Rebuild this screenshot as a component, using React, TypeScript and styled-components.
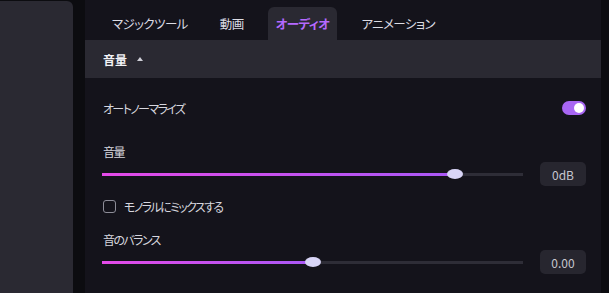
import React from "react";
import styled, { createGlobalStyle } from "styled-components";

const Global = createGlobalStyle`
  html, body { margin: 0; padding: 0; background: #0c0c10; overflow: hidden; }
  body { font-family: "Noto Sans CJK JP", "Noto Sans", sans-serif; font-feature-settings: "palt"; }
`;

const Page = styled.div`
  display: flex;
  width: 609px;
  height: 293px;
  background: #0c0c10;
  overflow: hidden;
`;

const SidePanel = styled.div`
  width: 73px;
  height: 100%;
  margin-top: 1px;
  background: #2a2932;
  border-top-right-radius: 6px;
  margin-right: 12px;
  flex-shrink: 0;
`;

const Main = styled.div`
  width: 516px;
  height: 100%;
  background: #14131b;
  display: flex;
  flex-direction: column;
  flex-shrink: 0;
`;

const TabBar = styled.div`
  display: flex;
  align-items: flex-end;
  height: 40px;
  padding-left: 19px;
  gap: 16px;
  flex-shrink: 0;
`;

const Tab = styled.div<{ $active?: boolean }>`
  height: 33px;
  padding: 0 8px 1px;
  display: flex;
  align-items: center;
  justify-content: center;
  font-size: 12.5px;
  letter-spacing: -0.6px;
  color: ${(p) => (p.$active ? "#b569ff" : "#dcdce4")};
  font-weight: ${(p) => (p.$active ? 700 : 400)};
  background: ${(p) => (p.$active ? "#2a2932" : "transparent")};
  border-radius: 6px 6px 0 0;
  box-sizing: border-box;
`;

const Header = styled.div`
  height: 38px;
  flex-shrink: 0;
  background: #2a2932;
  display: flex;
  align-items: center;
  padding-left: 18px;
  gap: 10px;
  font-size: 12px;
  font-weight: 700;
  color: #f2f2f6;
`;

const Caret = styled.span`
  width: 0;
  height: 0;
  border-left: 3.5px solid transparent;
  border-right: 3.5px solid transparent;
  border-bottom: 4px solid #d0d0d8;
  margin-top: -1px;
`;

const Body = styled.div`
  display: flex;
  flex-direction: column;
  padding: 0 15px 0 18px;
`;

const Row = styled.div<{ $h: number }>`
  height: ${(p) => p.$h}px;
  display: flex;
  align-items: center;
  gap: 17px;
  font-size: 12px;
  letter-spacing: -1.6px;
  color: #d6d6de;
  flex-shrink: 0;
`;

const Label = styled.span`
  flex: 1;
`;

const Toggle = styled.div`
  width: 24px;
  height: 14px;
  border-radius: 7px;
  background: #a866f3;
  display: flex;
  align-items: center;
  justify-content: flex-end;
  padding: 0 2px;
  box-sizing: border-box;
`;

const Knob = styled.div`
  width: 10px;
  height: 10px;
  border-radius: 50%;
  background: #ffffff;
`;

const Track = styled.div`
  flex: 1;
  height: 3px;
  background: #2e2d37;
  position: relative;
  margin-left: -1px;
`;

const Fill = styled.div`
  height: 100%;
  background: linear-gradient(90deg, #e44ae8, #a958f6);
`;

const Thumb = styled.div`
  position: absolute;
  top: 50%;
  width: 16px;
  height: 10px;
  border-radius: 50%;
  background: #d9d5f7;
  transform: translate(-50%, -50%);
`;

const ValueBox = styled.div`
  width: 46px;
  height: 24px;
  border-radius: 5px;
  background: #27262f;
  display: flex;
  align-items: center;
  justify-content: center;
  font-size: 12px;
  letter-spacing: 0;
  color: #c6c6d0;
  flex-shrink: 0;
`;

const CheckRow = styled(Row)`
  gap: 8px;
`;

const CheckBox = styled.div`
  width: 13px;
  height: 13px;
  border: 1.3px solid #8d8d98;
  border-radius: 3px;
  box-sizing: border-box;
`;

const Slider = ({ value }: { value: number }) => (
  <Track>
    <Fill style={{ width: `${value}%` }} />
    <Thumb style={{ left: `${value}%` }} />
  </Track>
);

export default function App() {
  return (
    <>
      <Global />
      <Page>
        <SidePanel />
        <Main>
          <TabBar>
            <Tab>マジックツール</Tab>
            <Tab>動画</Tab>
            <Tab $active>オーディオ</Tab>
            <Tab>アニメーション</Tab>
          </TabBar>
          <Header>
            音量
            <Caret />
          </Header>
          <Body>
            <Row $h={60}>
              <Label>オートノーマライズ</Label>
              <Toggle>
                <Knob />
              </Toggle>
            </Row>
            <Row $h={26}>
              <Label>音量</Label>
            </Row>
            <Row $h={20}>
              <Slider value={83.8} />
              <ValueBox>0dB</ValueBox>
            </Row>
            <CheckRow $h={44}>
              <CheckBox />
              <span>モノラルにミックスする</span>
            </CheckRow>
            <Row $h={22}>
              <Label>音のバランス</Label>
            </Row>
            <Row $h={24}>
              <Slider value={50.1} />
              <ValueBox>0.00</ValueBox>
            </Row>
            <Row $h={48}>
              <Label>フェードイン</Label>
            </Row>
          </Body>
        </Main>
      </Page>
    </>
  );
}
